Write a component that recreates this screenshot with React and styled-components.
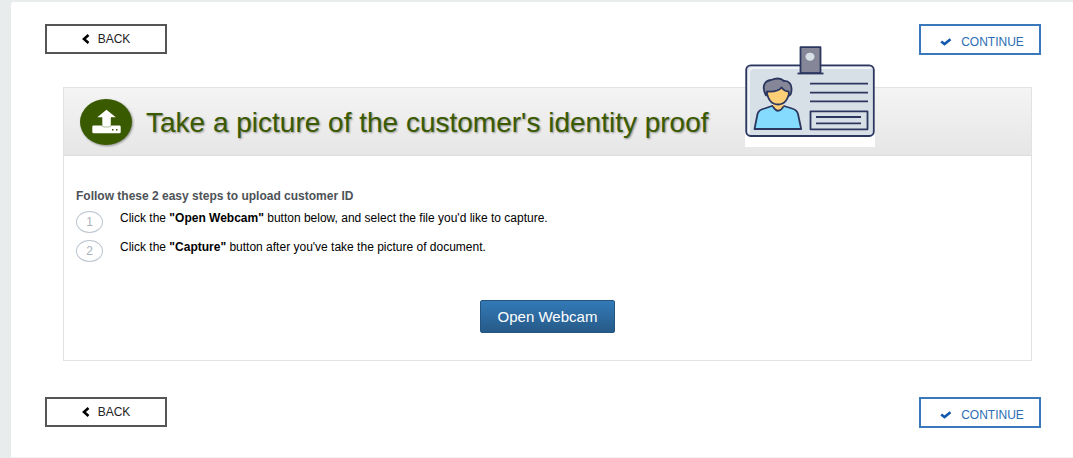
import React from "react";
import styled, { createGlobalStyle } from "styled-components";

const GlobalStyle = createGlobalStyle`
  * {
    box-sizing: border-box;
  }

  body {
    margin: 0;
    background: #e8eced;
    font-family: "Liberation Sans", Arial, sans-serif;
    font-size: 12px;
    color: #000;
  }
`;

const Page = styled.div`
  padding: 2px 0 0 11px;
`;

const Sheet = styled.main`
  min-height: calc(100vh - 2px);
  padding: 22px 32px 24px 34px;
  border-bottom: 1px solid #f3f3f3;
  background: #fff;
  border-top-left-radius: 3px;
`;

const Toolbar = styled.div`
  display: flex;
  align-items: flex-start;
  justify-content: space-between;
`;

const ToolbarButton = styled.button`
  display: flex;
  align-items: center;
  justify-content: center;
  gap: ${props => (props.$primary ? "9px" : "8px")};
  width: 122px;
  height: ${props => (props.$primary ? "31px" : "30px")};
  padding: ${props => (props.$primary ? "4px 0 0 4px" : "0")};
  border: 2px solid ${props => (props.$primary ? "#3a78bb" : "#555")};
  background: #fff;
  color: ${props => (props.$primary ? "#2c6db4" : "#222")};
  font-family: inherit;
  font-size: 12px;
  line-height: 16px;
  cursor: pointer;
`;

const Panel = styled.section`
  margin: 32px 9px 36px 18px;
  border: 1px solid #e2e2e2;
`;

const PanelHeader = styled.header`
  position: relative;
  display: flex;
  align-items: center;
  gap: 14px;
  height: 68px;
  padding: 0 16px;
  border-bottom: 1px solid #dcdcdc;
  background: linear-gradient(#f4f4f4, #e6e6e6);
`;

const UploadIcon = styled.svg`
  flex: none;
  width: 52px;
  height: 46px;
  filter: drop-shadow(1px 1px 1px rgba(0, 0, 0, 0.4));
`;

const Title = styled.h1`
  margin: 0;
  padding-top: 2px;
  color: #3a5a00;
  font-size: 28px;
  font-weight: normal;
  line-height: 32px;
  text-shadow: 1px 1px 2px rgba(0, 0, 0, 0.4);
  white-space: nowrap;
`;

/* hangs over the top edge of the header */
const Badge = styled.svg`
  position: absolute;
  top: -42px;
  left: 681px;
  width: 130px;
  height: 101px;
`;

const PanelBody = styled.div`
  padding: 33px 12px 27px;
`;

const Subtitle = styled.h2`
  margin: 0;
  color: #4d5257;
  font-size: 12px;
  line-height: 14px;
`;

const Steps = styled.ol`
  display: flex;
  flex-direction: column;
  gap: 7px;
  margin: 8px 0 38px;
  padding: 0;
  list-style: none;
`;

const Step = styled.li`
  display: flex;
  gap: 17px;
  line-height: 15px;
`;

const StepNumber = styled.span`
  flex: none;
  width: 27px;
  height: 22px;
  border: 1px solid #bcc5d0;
  border-radius: 50%;
  color: #a9b1bb;
  line-height: 21px;
  text-align: center;
`;

const WebcamButton = styled.button`
  display: block;
  width: 135px;
  height: 33px;
  margin: 0 auto;
  padding: 0;
  border: 1px solid #245580;
  border-radius: 2px;
  background: linear-gradient(#337ab7, #265a88);
  color: #fff;
  font-family: inherit;
  font-size: 15px;
  cursor: pointer;
`;

const Actions = () => (
  <Toolbar>
    <ToolbarButton type="button">
      <svg width="8" height="10" viewBox="0 0 8 10" aria-hidden="true">
        <path d="M6.500 1L2 5l4.500 4" fill="none" stroke="#000" strokeWidth="2.600" />
      </svg>
      BACK
    </ToolbarButton>
    <ToolbarButton type="button" $primary>
      <svg width="12" height="8" viewBox="0 0 12 8" aria-hidden="true">
        <path d="M1.200 3.500L4.500 6 10.500 1.300" fill="none" stroke="#1259ab" strokeWidth="2.600" />
      </svg>
      CONTINUE
    </ToolbarButton>
  </Toolbar>
);

const IdBadge = () => (
  <Badge viewBox="0 0 130 101" aria-hidden="true">
    <rect width="130" height="101" fill="#fff" />
    <g stroke="#2c3760" strokeWidth="1.800" strokeLinejoin="round">
      <rect x="1.200" y="19.300" width="127.600" height="70.700" rx="4.500" fill="#d8e0e7" />
      <path d="M4 87V27q0-5 5-5h117" fill="none" stroke="#f3f6f8" />
      <path d="M9.500 83l3-15q1-4 7-5.500l7.500-2.500h12l8 2.500q5 1.500 6 5.500l3.200 15z" fill="#85dbfd" />
      <path d="M28 56v4.500q5 8 10.500 0V56z" fill="#ffcf78" stroke="none" />
      <path d="M28 60.500q5 8.500 10.500 0" fill="none" />
      <path d="M21.500 44c1 9 4.500 14.500 11.500 14.500S43.500 53 44.500 44L38 39z" fill="#ffcf78" />
      <path
        d="M21 49.500C16 40 20 34.500 26 34c5-2 10-2 13 1 5-.5 8 4 7.500 8.500 0 3-.5 5-2 6l-1-4c-3 0-5-1.500-7-4-3 4-8 4.500-14.500 4z"
        fill="#858698"
      />
      <rect x="55.500" y="1.200" width="20" height="26" fill="#858698" />
      <path d="M52.500 27.500h26" />
      <path d="M65 37.700h58M65 46.700h58M65 55.300h58" />
      <rect x="65.500" y="65.300" width="57" height="18" fill="none" />
      <path d="M71 71h45M71 77.300h45" />
    </g>
    <ellipse cx="65" cy="10.700" rx="4.500" ry="4" fill="#d8e0e7" />
  </Badge>
);

const App = () => (
  <>
    <GlobalStyle />
    <Page>
      <Sheet>
        <Actions />
        <Panel>
          <PanelHeader>
            <UploadIcon viewBox="0 0 52 46" aria-hidden="true">
              <ellipse cx="26" cy="23" rx="26" ry="23" fill="#3a5a00" />
              <rect x="12.300" y="26.500" width="28.400" height="7.700" rx="1.300" fill="#fff" />
              <path
                d="M26.500 10.800l9.300 7.400h-5v8q0 1.500-1.500 1.500h-5.500q-1.500 0-1.500-1.500v-8h-5z"
                fill="#fff"
                stroke="#3a5a00"
                strokeWidth="1"
                paintOrder="stroke"
              />
              <path d="M32 30.800h1.500M36 30.800h1.500" stroke="#3a5a00" strokeWidth="1.500" />
            </UploadIcon>
            <Title>Take a picture of the customer's identity proof</Title>
            <IdBadge />
          </PanelHeader>
          <PanelBody>
            <Subtitle>Follow these 2 easy steps to upload customer ID</Subtitle>
            <Steps>
              <Step>
                <StepNumber>1</StepNumber>
                <span>
                  Click the <b>"Open Webcam"</b> button below, and select the
                  file you'd like to capture.
                </span>
              </Step>
              <Step>
                <StepNumber>2</StepNumber>
                <span>
                  Click the <b>"Capture"</b> button after you've take the
                  picture of document.
                </span>
              </Step>
            </Steps>
            <WebcamButton type="button">Open Webcam</WebcamButton>
          </PanelBody>
        </Panel>
        <Actions />
      </Sheet>
    </Page>
  </>
);

export default App;
